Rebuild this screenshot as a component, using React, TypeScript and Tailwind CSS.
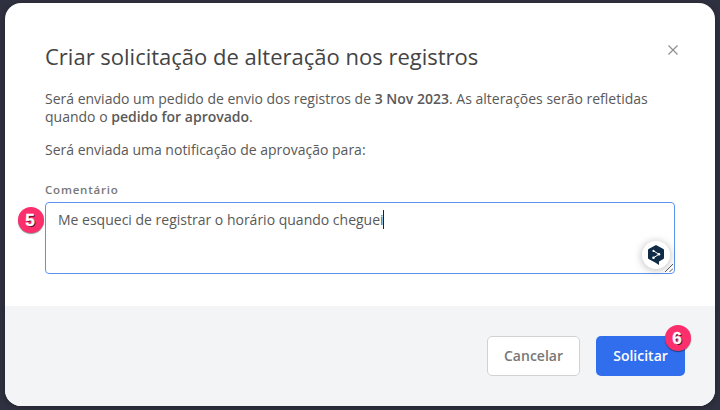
import React from "react";

interface StepBadgeProps {
  step: number;
  className: string;
}

function StepBadge({ step, className }: StepBadgeProps) {
  return (
    <span
      className={`absolute flex size-[26px] items-center justify-center rounded-full bg-[#fd2e6c] pr-0.5 font-['Liberation_Sans',sans-serif] text-[17px] leading-none font-bold text-white shadow-[0_1px_1px_rgba(0,0,0,0.45)] [-webkit-text-stroke:0.3px_white] [text-shadow:1px_1px_0px_rgba(0,0,0,0.7)] ${className}`}
    >
      {step}
    </span>
  );
}

function AssistantIcon() {
  return (
    <svg width="16" height="20" viewBox="0 0 16 20" fill="none">
      <path d="M8 0 15.4 4.1Q16 4.5 16 5.2V13Q16 13.7 15.4 14L11 16.5V20L7.6 17.8.6 14Q0 13.7 0 13V5.2Q0 4.5.6 4.1Z" fill="#0f2b46" />
      <path d="M5.5 5.9 11 9.3 5.5 12.7" stroke="#fff" strokeWidth="1" />
      <circle cx="5.5" cy="5.9" r="1.1" fill="#fff" />
      <circle cx="11" cy="9.3" r="1.3" fill="#fff" />
      <circle cx="5.5" cy="12.7" r="1.3" fill="#fff" />
    </svg>
  );
}

export default function App() {
  return (
    <div className="h-[410px] w-[720px] overflow-hidden bg-[#303140] px-[5px] pt-[3px] font-['Open_Sans',sans-serif] text-[14px] text-[#595959]">
      <div className="flex h-[403px] flex-col overflow-hidden rounded-[16px] bg-white shadow-[0_1px_6px_rgba(0,0,0,0.3)]">
        {/* Content */}
        <div className="h-[303px] px-10 pt-[37px]">
          <header className="flex items-start justify-between">
            <h1 className="text-[22px] leading-8 text-[#444]">Criar solicitação de alteração nos registros</h1>
            <button className="mt-[5px] -mr-[3px]" aria-label="Fechar">
              <svg width="10" height="10" viewBox="0 0 10 10" stroke="#8c8c8c" strokeWidth="1.1">
                <path d="M.5.5l9 9M9.5.5l-9 9" />
              </svg>
            </button>
          </header>

          <p className="mt-[18px] leading-[18px]">
            Será enviado um pedido de envio dos registros de <b className="font-semibold">3 Nov 2023</b>. As alterações serão refletidas
            <br />
            quando o <b className="font-semibold">pedido for aprovado</b>.
          </p>
          <p className="mt-[15px] leading-[18px]">Será enviada uma notificação de aprovação para:</p>

          <div className="mt-[22px] text-[11.5px] leading-[18px] font-semibold tracking-[0.8px] text-[#777]">Comentário</div>
          <div className="relative mt-[3px] h-[72px] rounded-[4px] border border-[#5c93f0] px-3 pt-[7px]">
            <div className="flex items-center leading-[19px]">
              <span>Me esqueci de registrar o horário quando cheguei</span>
              <span className="-ml-px h-[19px] w-px bg-[#222]" />
            </div>
            <StepBadge step={5} className="top-[4px] -left-[28px]" />
            <span className="absolute right-[4px] bottom-[4px] flex size-[28px] items-center justify-center rounded-full bg-white shadow-[0_1px_8px_rgba(0,0,0,0.28)]">
              <AssistantIcon />
            </span>
            <svg className="absolute right-[1px] bottom-[1px]" width="8" height="8" viewBox="0 0 8 8" stroke="#555" strokeWidth="1">
              <path d="M0 8 8 0M4.5 8 8 4.5" />
            </svg>
          </div>
        </div>

        {/* Actions */}
        <footer className="flex grow items-center justify-end gap-4 bg-[#f3f4f6] pr-[30px] font-semibold">
          <button className="h-10 w-[93px] rounded-[5px] border border-[#d2d2d2] bg-white pb-0.5 text-[#777]">Cancelar</button>
          <button className="relative h-10 w-[89px] rounded-[5px] bg-[#316eed] pb-0.5 text-white">
            Solicitar
            <StepBadge step={6} className="-top-[11px] -right-[6px]" />
          </button>
        </footer>
      </div>
    </div>
  );
}
